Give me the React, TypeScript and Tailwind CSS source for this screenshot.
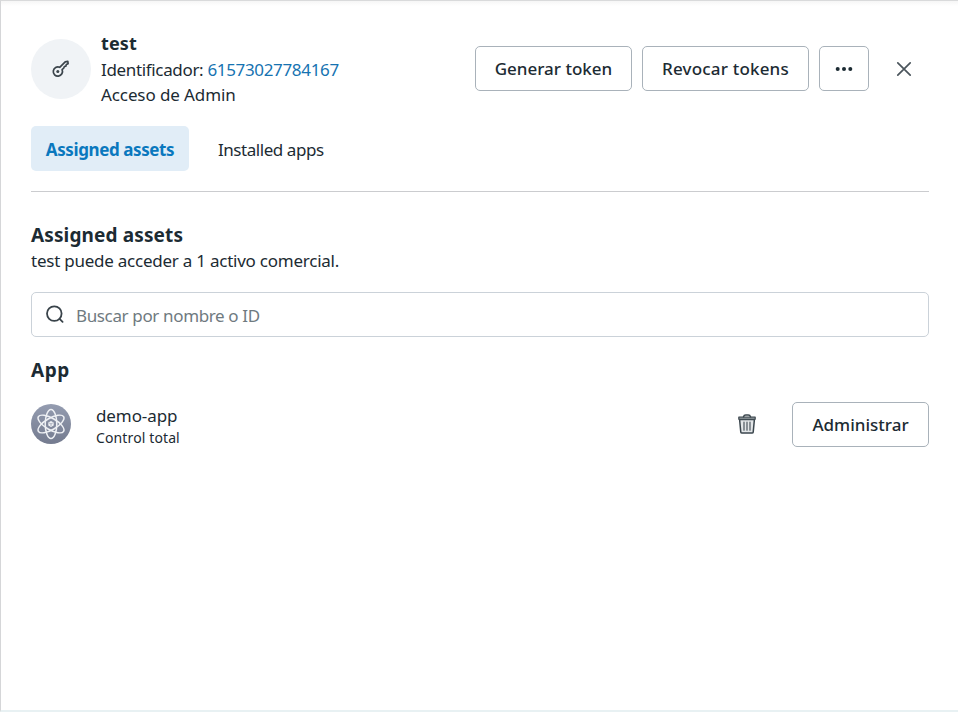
import type { ReactNode } from "react";

function KeyIcon() {
  return (
    <svg width="20" height="20" viewBox="0 0 20 20" fill="none" stroke="#3b444b" strokeWidth="1.7" strokeLinejoin="round" strokeLinecap="round">
      <path d="M8.700 8.300 14.200 2.900l2.600-.5.300 2.300-1.800.9-.4 1.500-1.500.4-.6 1.500-1.700 1.700a4.600 4.600 0 1 1-2.400-2.400Z" />
      <circle cx="6.800" cy="12.600" r="1.500" fill="#3b444b" stroke="none" />
    </svg>
  );
}

function AtomIcon() {
  return (
    <svg width="40" height="40" viewBox="0 0 40 40" fill="none" stroke="#eef0f4" strokeWidth="1.500">
      <defs>
        <linearGradient id="atom-bg" x1="0" y1="0" x2="0" y2="1">
          <stop offset="0" stopColor="#949cb0" />
          <stop offset="1" stopColor="#747b8f" />
        </linearGradient>
      </defs>
      <circle cx="20" cy="20" r="20" fill="url(#atom-bg)" stroke="none" />
      <ellipse cx="20" cy="20" rx="5.800" ry="14.600" />
      <ellipse cx="20" cy="20" rx="5.800" ry="14.600" transform="rotate(60 20 20)" />
      <ellipse cx="20" cy="20" rx="5.800" ry="14.600" transform="rotate(-60 20 20)" />
      <path d="m20 17 2.700 1.500v3L20 23l-2.700-1.500v-3Z" fill="#eef0f4" stroke="none" />
      <path d="m18.200 19 1.800.9 1.800-.9M20 20v2" stroke="#858c9f" strokeWidth=".6" />
    </svg>
  );
}

function TrashIcon() {
  return (
    <svg width="20" height="22" viewBox="0 0 20 22" fill="none" stroke="#3b464d" strokeWidth="1.500" strokeLinejoin="round" strokeLinecap="round">
      <path d="M2.600 6.500h14.800l-1.200 12.600a1.200 1.200 0 0 1-1.200 1H5a1.200 1.200 0 0 1-1.200-1Z" fill="#e3e6e8" />
      <path d="M1.800 4.200h16.400v2H1.800Z" fill="#c9ced1" strokeWidth="1.200" />
      <path d="M6.500 3.800c.3-1.300 1.100-1.900 2.200-1.900h2.600c1.100 0 1.900.6 2.200 1.900" />
      <path d="M7 9.200v8M10 9.200v8M13 9.200v8" strokeWidth="1.300" stroke="#59636a" />
    </svg>
  );
}

function SearchIcon() {
  return (
    <svg width="20" height="20" viewBox="0 0 20 20" fill="none" stroke="#39434a" strokeWidth="1.800" strokeLinecap="round">
      <circle cx="9.300" cy="8.600" r="7.300" />
      <path d="m14.600 13.900 3 3" />
    </svg>
  );
}

function Button({ children, className, label }: { children: ReactNode; className: string; label?: string }) {
  return (
    <button aria-label={label} className={`flex h-[45px] shrink-0 items-center justify-center rounded-[5px] border border-[#a9b2ba] bg-white text-[17px] font-medium whitespace-nowrap ${className}`}>
      {children}
    </button>
  );
}

export default function App() {
  return (
    <main className="h-[712px] w-[958px] overflow-hidden border-t border-b-2 border-l border-t-[#d9dadb] border-b-[#e8f1f3] border-l-[#d5d6d8] bg-linear-to-b from-[#f6f6f6] to-white to-[5px] pr-[29px] pl-[30px] font-['Noto_Sans','Open_Sans',sans-serif] text-[17px] tracking-[-0.24px] text-[#1c2b33]">
      <header className="flex h-[106px] pt-[30px]">
        <div className="mt-2 mr-[10px] flex size-[60px] items-center justify-center rounded-full bg-[#f0f3f6]">
          <KeyIcon />
        </div>
        <div className="flex flex-col leading-[25px]">
          <h1 className="text-[18px] font-bold tracking-[0.1px]">test</h1>
          <p className="mt-px tracking-[-0.34px]">Identificador: <a className="text-[#1673b1]">61573027784167</a></p>
          <p className="tracking-[-0.1px]">Acceso de Admin</p>
        </div>
        <div className="mt-[15px] ml-auto flex gap-[10px]">
          <Button className="w-[157px] tracking-normal">Generar token</Button>
          <Button className="w-[167px] tracking-[0.18px]">Revocar tokens</Button>
          <Button className="w-[50px]" label="Más opciones">
            <svg width="18" height="6" viewBox="0 0 18 6" fill="#1c2b33">
              <circle cx="2.700" cy="3" r="2" /><circle cx="9" cy="3" r="2" /><circle cx="15.300" cy="3" r="2" />
            </svg>
          </Button>
          <button aria-label="Cerrar" className="mr-[15px] ml-[15px] flex h-[45px] w-5 items-center justify-center">
            <svg width="16" height="16" viewBox="0 0 16 16" stroke="#4b555c" strokeWidth="1.700" strokeLinecap="round">
              <path d="m1.800 1.800 12.400 12.400M14.200 1.800 1.800 14.200" />
            </svg>
          </button>
        </div>
      </header>

      <nav className="mt-[19px] flex h-[66px] border-b border-[#cbcccf]">
        <span className="flex h-[45px] w-[158px] items-center justify-center rounded-[5px] bg-[#e1edf7] pt-[3px] font-bold tracking-[-0.4px] whitespace-nowrap text-[#0a78be]">Assigned assets</span>
        <span className="ml-[29px] flex h-[45px] items-center pt-[3px] tracking-[-0.45px]">Installed apps</span>
      </nav>

      <section className="pt-[31px]">
        <h2 className="text-[19px] leading-[25px] font-bold tracking-[0.13px]">Assigned assets</h2>
        <p className="leading-[25px]">test puede acceder a 1 activo comercial.</p>
        <div className="mt-[19px] flex h-[45px] items-center rounded-[5px] border border-[#cbd2d9] pl-[13px] text-[#6f7a80]">
          <SearchIcon />
          <span className="ml-[11px] pt-[2px] tracking-[-0.36px]">Buscar por nombre o ID</span>
        </div>
        <h2 className="mt-[21px] text-[19px] leading-[25px] font-bold tracking-[0.5px]">App</h2>
        <div className="mt-[19px] flex h-[45px] items-center">
          <div className="pb-px"><AtomIcon /></div>
          <div className="ml-[25px] flex flex-col pt-[3px]">
            <span className="leading-[23px] tracking-[-0.1px]">demo-app</span>
            <span className="text-[14px] leading-[21px] tracking-[0.12px]">Control total</span>
          </div>
          <div className="mr-[35px] ml-auto pb-px"><TrashIcon /></div>
          <Button className="w-[137px] tracking-normal">Administrar</Button>
        </div>
      </section>
    </main>
  );
}
